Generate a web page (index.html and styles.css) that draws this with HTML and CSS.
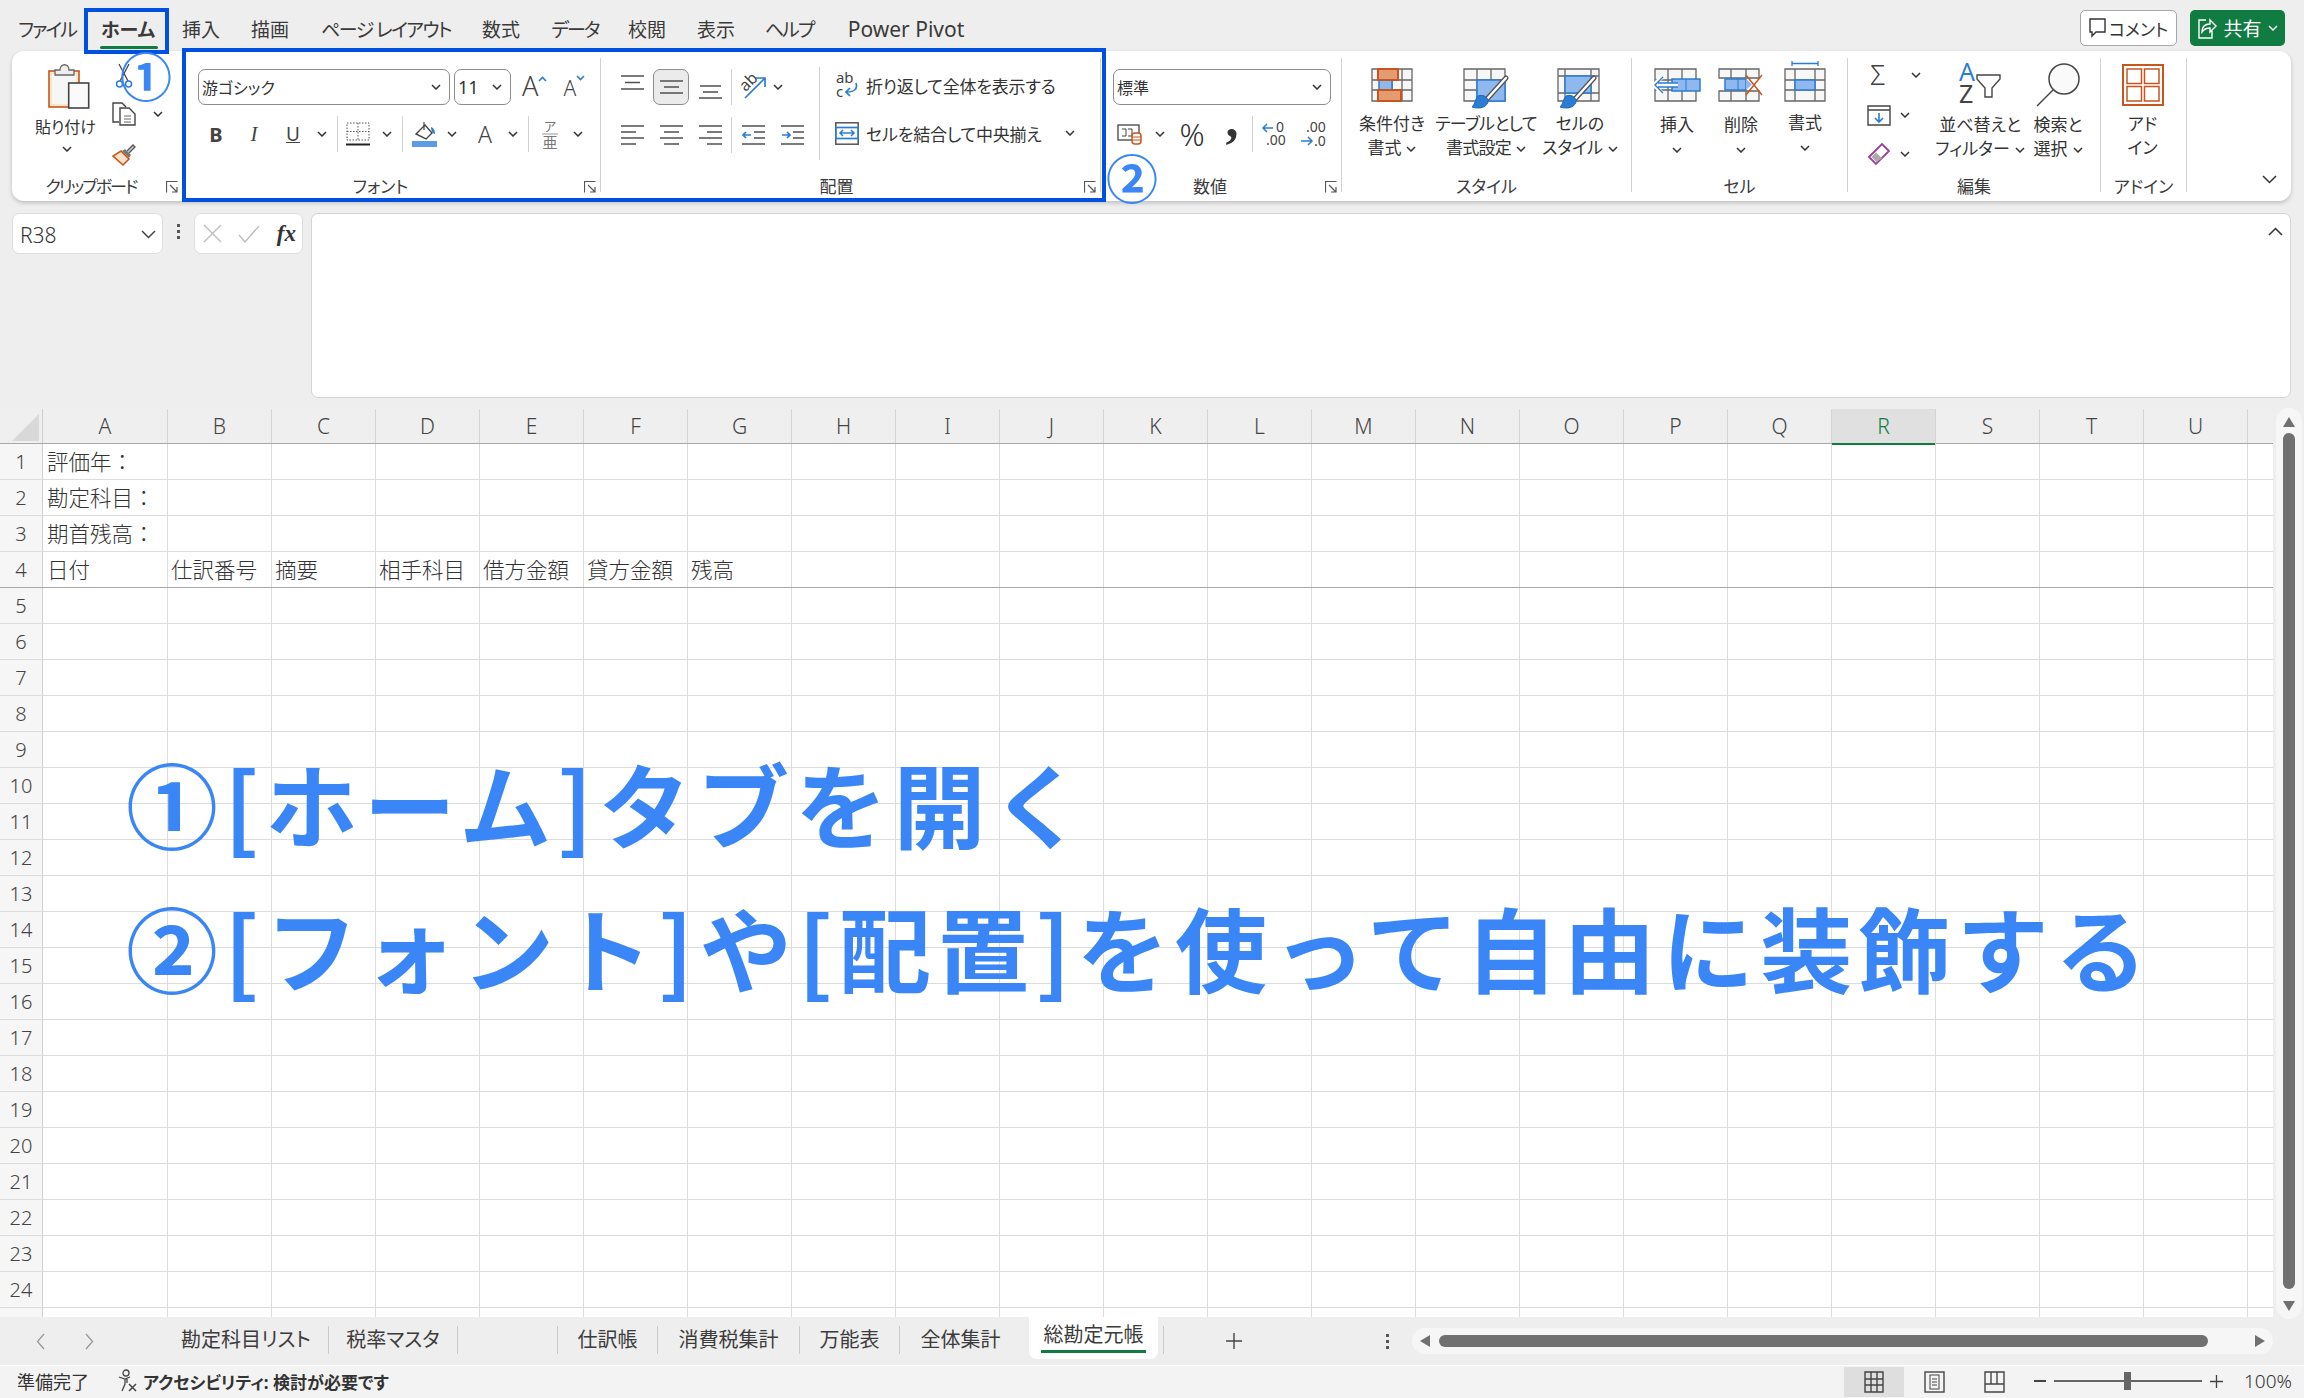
FILE: index.html
```html
<!DOCTYPE html>
<html lang="ja">
<head>
<meta charset="utf-8">
<title>総勘定元帳</title>
<link rel="stylesheet" href="styles.css">
</head>
<body>
<svg class="defs" width="0" height="0" aria-hidden="true">
  <symbol id="chev" viewBox="0 0 10 6"><path d="M1 1l4 4 4-4" fill="none" stroke="#333" stroke-width="1.5"/></symbol>
  <symbol id="launch" viewBox="0 0 12 12"><path d="M.5 11.5V.5h11M4 4l7 7M11 6v5H6" fill="none" stroke="#555" stroke-width="1.2"/></symbol>
  <symbol id="hl" viewBox="0 0 23 22"><path d="M0 2h23M0 8h15M0 14h23M0 20h15" stroke="#505050" stroke-width="1.6"/></symbol>
  <symbol id="hc" viewBox="0 0 23 22"><path d="M0 2h23M4 8h15M0 14h23M4 20h15" stroke="#505050" stroke-width="1.6"/></symbol>
  <symbol id="hr" viewBox="0 0 23 22"><path d="M0 2h23M8 8h15M0 14h23M8 20h15" stroke="#505050" stroke-width="1.6"/></symbol>
  <symbol id="brush" viewBox="0 0 46 42"><path d="M43 10L24 31" stroke="#555" stroke-width="5" stroke-linecap="round"/><path d="M43 10L24 31" stroke="#fff" stroke-width="2.4" stroke-linecap="round"/><path d="M15 28c5-2 10 1 10 5 0 5-7 9-16 6 3-2 3-8 6-11z" fill="#2b7cd3" stroke="#1f6ab8"/></symbol>
</svg>

<div class="app">
  <header class="menubar">
    <nav class="menu">
      <span class="kn">ファイル</span><span class="on">ホーム</span><span>挿入</span><span>描画</span><span class="kn2">ページ レイアウト</span><span>数式</span><span class="kn">データ</span><span>校閲</span><span>表示</span><span class="kn">ヘルプ</span><span class="pp">Power Pivot</span>
    </nav>
    <div class="actions">
      <button class="comment"><svg width="17" height="20" viewBox="0 0 17 20"><path d="M1 1h15v13H7l-4 4v-4H1z" fill="none" stroke="#333" stroke-width="1.4"/></svg>コメント</button>
      <button class="share"><svg width="20" height="22" viewBox="0 0 20 22"><path d="M9 3H2v18h13v-7M5 15c0-5 3-8 8-8V3l6 6-6 6v-4c-4 0-6 1-8 4z" fill="none" stroke="#fff" stroke-width="1.4"/></svg>共有<svg class="chev wh" width="10" height="6" viewBox="0 0 10 6"><path d="M1 1l4 4 4-4" fill="none" stroke="#fff" stroke-width="1.5"/></svg></button>
    </div>
  </header>

  <section class="ribbon">
    <!-- clipboard -->
    <div class="group g-clip">
      <div class="body clip-body">
        <div class="paste">
          <svg width="42" height="46" viewBox="0 0 42 46"><rect x="1" y="8" width="30" height="36" fill="#fbe6c6" stroke="#c8551e" stroke-width="1.6"/><rect x="4" y="11" width="24" height="30" fill="#f6f6f4"/><path d="M7 12V7h5c0-7 9-7 9 0h5v5z" fill="#eee" stroke="#666" stroke-width="1.3"/><rect x="20.7" y="20" width="20" height="25" fill="#fafafa" stroke="#444" stroke-width="1.6"/></svg>
          <span class="lbl">貼り付け</span>
          <svg class="chev"><use href="#chev"/></svg>
        </div>
        <div class="clip-tools">
          <svg class="ic-cut" width="16" height="25" viewBox="0 0 16 25"><path d="M3 1l9 17M13 1L4 18" stroke="#444" stroke-width="1.3" fill="none"/><circle cx="3.5" cy="21" r="3" fill="#fff" stroke="#2b7cd3" stroke-width="1.5"/><circle cx="12.5" cy="21" r="3" fill="#fff" stroke="#2b7cd3" stroke-width="1.5"/></svg>
          <div class="copy-row"><svg width="25" height="24" viewBox="0 0 25 24"><path d="M7 20H1V1h9l4 4" fill="none" stroke="#444" stroke-width="1.4"/><path d="M8 6h9l6 6v11H8z" fill="#fff" stroke="#444" stroke-width="1.4"/><path d="M12 14h7M12 17h7M12 20h7" stroke="#666"/></svg><svg class="chev"><use href="#chev"/></svg></div>
          <svg class="ic-brush" width="24" height="22" viewBox="0 0 24 22"><path d="M15 7l6-6 2 2-6 6" fill="#ccc" stroke="#555" stroke-width="1.3"/><path d="M13 5l6 6-2 3L10 7z" fill="#777"/><path d="M9 7l8 8-6 6L1 12z" fill="#fbe1c8" stroke="#c8551e" stroke-width="1.6"/></svg>
        </div>
      </div>
      <div class="glabel gl-clip">クリップボード<svg class="launch"><use href="#launch"/></svg></div>
    </div>

    <!-- font -->
    <div class="group g-font">
      <div class="body">
        <div class="font-r1">
          <div class="combo c-font"><span>游ゴシック</span><svg class="chev"><use href="#chev"/></svg></div>
          <div class="combo c-size"><span>11</span><svg class="chev"><use href="#chev"/></svg></div>
          <div class="grow"><span>A</span><svg class="caret" width="9" height="6" viewBox="0 0 9 6"><path d="M1 5l3.500-3.500L8 5" fill="none" stroke="#2b7cd3" stroke-width="1.6"/></svg></div>
          <div class="shrink"><span>A</span><svg class="caret" width="9" height="6" viewBox="0 0 9 6"><path d="M1 1l3.500 3.500L8 1" fill="none" stroke="#2b7cd3" stroke-width="1.6"/></svg></div>
        </div>
        <div class="font-r2">
          <b class="t-b">B</b><i class="t-i">I</i><u class="t-u">U</u><svg class="chev"><use href="#chev"/></svg><span class="vsep"></span>
          <svg width="24" height="24" viewBox="0 0 24 24"><path d="M1 1h22v17H1zM12 1v17M1 9.500h22" fill="none" stroke="#555" stroke-dasharray="1.500 1.500"/><path d="M0 22.500h24" stroke="#222" stroke-width="2"/></svg><svg class="chev"><use href="#chev"/></svg><span class="vsep"></span>
          <svg width="25" height="26" viewBox="0 0 25 26"><path d="M4 13L13 4l7 8-6 6z" fill="#fff" stroke="#444" stroke-width="1.4"/><path d="M12 1v8" stroke="#444" stroke-width="1.2"/><path d="M19 6c3 1 4 4 4 7-2 0-4-3-4-7z" fill="#2b7cd3"/><rect y="20" width="25" height="6" fill="#5b9be6"/></svg><svg class="chev"><use href="#chev"/></svg>
          <span class="t-a">A</span><svg class="chev"><use href="#chev"/></svg><span class="vsep"></span>
          <span class="phon"><small>ア</small>亜</span><svg class="chev"><use href="#chev"/></svg>
        </div>
      </div>
      <div class="glabel gl-font">フォント<svg class="launch"><use href="#launch"/></svg></div>
    </div>

    <!-- alignment -->
    <div class="group g-align">
      <div class="body al-body">
        <div class="al-left">
          <div class="al-r1">
            <svg class="al-top" width="23" height="15" viewBox="0 0 23 15"><path d="M0 1h23M4 7.500h15M0 14h23" stroke="#505050" stroke-width="1.6"/></svg>
            <span class="al-on"><svg width="23" height="14" viewBox="0 0 23 14"><path d="M0 1h23M4 7h15M0 13h23" stroke="#505050" stroke-width="1.6"/></svg></span>
            <svg class="al-bot" width="23" height="14" viewBox="0 0 23 14"><path d="M1 1h21M4 7h15M0 13h23" stroke="#505050" stroke-width="1.6"/></svg>
            <span class="vsep tall"></span>
            <svg width="26" height="26" viewBox="0 0 26 26"><text x="1" y="14" class="svgt" transform="rotate(-45 8 12)">ab</text><path d="M4 24L23 5M15 4h9v9" fill="none" stroke="#2b7cd3" stroke-width="1.7"/></svg>
            <svg class="chev"><use href="#chev"/></svg>
          </div>
          <div class="al-r2">
            <svg width="23" height="22"><use href="#hl"/></svg>
            <svg width="23" height="22"><use href="#hc"/></svg>
            <svg width="23" height="22"><use href="#hr"/></svg>
            <span class="vsep tall"></span>
            <svg width="23" height="22" viewBox="0 0 23 22"><path d="M0 2h23M12 8h11M12 14h11M0 20h23" stroke="#505050" stroke-width="1.6"/><path d="M9 11H1M4 8l-3 3 3 3" fill="none" stroke="#2b7cd3" stroke-width="1.7"/></svg>
            <svg width="23" height="22" viewBox="0 0 23 22"><path d="M0 2h23M12 8h11M12 14h11M0 20h23" stroke="#505050" stroke-width="1.6"/><path d="M1 11h8M6 8l3 3-3 3" fill="none" stroke="#2b7cd3" stroke-width="1.7"/></svg>
          </div>
        </div>
        <div class="al-right">
          <div class="al-cmd"><svg width="24" height="28" viewBox="0 0 24 28"><text x="1" y="12" class="svgt s15">ab</text><text x="1" y="26" class="svgt s15">c</text><path d="M21 12c2 6-2 9-9 9M15 17l-4 4 4 4" fill="none" stroke="#2b7cd3" stroke-width="1.7"/></svg><span>折り返して全体を表示する</span></div>
          <div class="al-cmd"><svg width="24" height="23" viewBox="0 0 24 23"><rect x=".8" y=".8" width="22.400" height="21.400" fill="#fff" stroke="#555" stroke-width="1.500"/><rect x="1" y="5.500" width="22" height="11" fill="#fff" stroke="#2b7cd3" stroke-width="1.700"/><path d="M5 11h14M8 8l-3 3 3 3M16 8l3 3-3 3" fill="none" stroke="#2b7cd3" stroke-width="1.500"/></svg><span>セルを結合して中央揃え</span><svg class="chev merge-chev"><use href="#chev"/></svg></div>
        </div>
      </div>
      <div class="glabel gl-align">配置<svg class="launch"><use href="#launch"/></svg></div>
    </div>

    <!-- number -->
    <div class="group g-num">
      <div class="body">
        <div class="combo c-num"><span>標準</span><svg class="chev"><use href="#chev"/></svg></div>
        <div class="num-r2">
          <svg width="26" height="21" viewBox="0 0 26 21"><rect x="1" y="1" width="21" height="15" fill="#fff" stroke="#444" stroke-width="1.300"/><path d="M5 5h4v7H5M11 5h4v7h-4" fill="none" stroke="#444"/><rect x="15" y="9" width="9" height="11" rx="3" fill="#fff" stroke="#c8551e" stroke-width="1.500"/><path d="M15 13h9M15 16h9" stroke="#c8551e"/></svg>
          <svg class="chev"><use href="#chev"/></svg>
          <span class="t-pct">%</span>
          <span class="t-comma">,</span>
          <span class="vsep"></span>
          <svg width="26" height="26" viewBox="0 0 26 26"><path d="M12 7H2M6 3L2 7l4 4" fill="none" stroke="#2b7cd3" stroke-width="1.500"/><text x="15" y="11" class="svgt s14">0</text><text x="5" y="24" class="svgt s14">.00</text></svg>
          <svg width="26" height="26" viewBox="0 0 26 26"><text x="7" y="11" class="svgt s14">.00</text><path d="M2 20h11M9 16l4 4-4 4" fill="none" stroke="#2b7cd3" stroke-width="1.500"/><text x="15" y="25" class="svgt s14">.0</text></svg>
        </div>
      </div>
      <div class="glabel gl-num">数値<svg class="launch"><use href="#launch"/></svg></div>
    </div>

    <!-- styles -->
    <div class="group g-style">
      <div class="body big3">
        <div class="bigcmd">
          <div class="bigico"><svg width="42" height="34" viewBox="0 0 42 34"><path d="M1 1h40v32H1zM1 12h40M1 22h40M11 1v32M21 1v32M31 1v32" fill="#f7f7f7" stroke="#666" stroke-width="1.300"/><rect x="8" y="12" width="13" height="10" fill="#8fb9ee" stroke="#2b7cd3" stroke-width="1.500"/><rect x="7" y="1" width="20" height="11" fill="#e39b6f" stroke="#c8551e" stroke-width="2"/><rect x="7" y="22" width="23" height="11" fill="#e39b6f" stroke="#c8551e" stroke-width="2"/></svg></div>
          <div class="lbl2">条件付き<br>書式<svg class="chev"><use href="#chev"/></svg></div>
        </div>
        <div class="bigcmd">
          <div class="bigico"><svg width="46" height="42" viewBox="0 0 46 42"><path d="M1 1h41v32H1zM1 12h41M1 22h41M14 1v32M28 1v32" fill="#f7f7f7" stroke="#666" stroke-width="1.300"/><rect x="14" y="12" width="28" height="21" fill="#8fb9ee" stroke="#2b7cd3" stroke-width="1.500"/><use href="#brush"/></svg></div>
          <div class="lbl2 tight">テーブルとして<br>書式設定<svg class="chev"><use href="#chev"/></svg></div>
        </div>
        <div class="bigcmd">
          <div class="bigico"><svg width="46" height="42" viewBox="0 0 46 42"><path d="M1 1h41v32H1zM1 8h41M1 25h41M8 1v32M34 1v32" fill="#f7f7f7" stroke="#666" stroke-width="1.300"/><rect x="8" y="8" width="26" height="17" fill="#8fb9ee" stroke="#2b7cd3" stroke-width="1.500"/><use href="#brush" x="-6"/></svg></div>
          <div class="lbl2">セルの<br>スタイル<svg class="chev"><use href="#chev"/></svg></div>
        </div>
      </div>
      <div class="glabel">スタイル</div>
    </div>

    <!-- cells -->
    <div class="group g-cells">
      <div class="body big3">
        <div class="bigcmd">
          <div class="bigico"><svg width="50" height="34" viewBox="0 0 50 34"><path d="M3 1h41v32H3zM3 12h41M3 22h41M16 1v32M30 1v32" fill="#f7f7f7" stroke="#666" stroke-width="1.300"/><rect x="20" y="11" width="28" height="12" fill="#8fb9ee" stroke="#2b7cd3" stroke-width="1.500"/><path d="M34 11v12" stroke="#2b7cd3"/><path d="M26 17H3M10 9l-8 8 8 8" fill="none" stroke="#fff" stroke-width="4"/><path d="M26 15H6M26 19H6M11 9l-8 8 8 8" fill="none" stroke="#2b7cd3" stroke-width="1.400"/></svg></div>
          <div class="lbl2 lo">挿入<br><svg class="chev solo"><use href="#chev"/></svg></div>
        </div>
        <div class="bigcmd">
          <div class="bigico"><svg width="46" height="34" viewBox="0 0 46 34"><path d="M1 1h40v9H1zM1 23h40v10H1zM13 1v9M28 1v9M13 23v10M28 23v10" fill="#f7f7f7" stroke="#666" stroke-width="1.300"/><rect x="7" y="11" width="21" height="11" fill="#8fb9ee" stroke="#2b7cd3" stroke-width="1.500"/><path d="M20 11v11" stroke="#2b7cd3"/><path d="M28 11l6 5.500-6 5.500z" fill="#8fb9ee"/><path d="M28 7l16 20M44 7L28 27" stroke="#c8551e" stroke-width="1.500"/></svg></div>
          <div class="lbl2 lo">削除<br><svg class="chev solo"><use href="#chev"/></svg></div>
        </div>
        <div class="bigcmd up">
          <div class="bigico"><svg width="42" height="41" viewBox="0 0 42 41"><path d="M8 2.500h26M8 0v5M34 0v5" stroke="#2b7cd3" stroke-width="1.300" fill="none"/><path d="M1 8h40v32H1zM1 19h40M1 29h40M11 8v32M31 8v32" fill="#f7f7f7" stroke="#666" stroke-width="1.300"/><rect x="11" y="19" width="20" height="10" fill="#8fb9ee" stroke="#2b7cd3" stroke-width="1.500"/></svg></div>
          <div class="lbl2 lo">書式<br><svg class="chev solo"><use href="#chev"/></svg></div>
        </div>
      </div>
      <div class="glabel">セル</div>
    </div>

    <!-- editing -->
    <div class="group g-edit">
      <div class="body edit-body">
        <div class="edit-left">
          <div class="er er1"><span class="sig">Σ</span><svg class="chev"><use href="#chev"/></svg></div>
          <div class="er er2"><svg width="24" height="21" viewBox="0 0 24 21"><path d="M1 1h22v19H1zM1 5h22" fill="#fff" stroke="#444" stroke-width="1.400"/><path d="M12 8v9M8 13l4 4 4-4" fill="none" stroke="#2b7cd3" stroke-width="1.600"/></svg><svg class="chev"><use href="#chev"/></svg></div>
          <div class="er er3"><svg width="24" height="24" viewBox="0 0 24 24"><path d="M2 15L15 2l7 7L9 22z" fill="#fff" stroke="#9b3f9b" stroke-width="1.800"/><path d="M4.500 15L9 10.500l6 6L9.500 20z" fill="#aaa"/></svg><svg class="chev"><use href="#chev"/></svg></div>
        </div>
        <div class="bigcmd sort">
          <div class="bigico"><svg width="42" height="40" viewBox="0 0 42 40"><text x="0" y="17" class="svgt az blue">A</text><text x="0" y="39" class="svgt az">Z</text><path d="M18 11h23v4l-8 9v9h-7v-9l-8-9z" fill="#fff" stroke="#444" stroke-width="1.400"/></svg></div>
          <div class="lbl2">並べ替えと<br>フィルター<svg class="chev"><use href="#chev"/></svg></div>
        </div>
        <div class="bigcmd find">
          <div class="bigico"><svg width="44" height="44" viewBox="0 0 44 44"><circle cx="28" cy="16" r="15" fill="#fafafa" stroke="#444" stroke-width="1.500"/><path d="M17 27L1 43" stroke="#444" stroke-width="1.500"/></svg></div>
          <div class="lbl2">検索と<br>選択<svg class="chev"><use href="#chev"/></svg></div>
        </div>
      </div>
      <div class="glabel">編集</div>
    </div>

    <!-- add-ins -->
    <div class="group g-add">
      <div class="body big3">
        <div class="bigcmd">
          <div class="bigico"><svg width="42" height="42" viewBox="0 0 42 42"><rect x="1" y="1" width="40" height="40" fill="#fff" stroke="#c8551e" stroke-width="2"/><rect x="5" y="5" width="14.500" height="14.500" fill="#fff" stroke="#c8551e" stroke-width="1.500"/><rect x="22.500" y="5" width="14.500" height="14.500" fill="#fff" stroke="#c8551e" stroke-width="1.500"/><rect x="5" y="22.500" width="14.500" height="14.500" fill="#fff" stroke="#c8551e" stroke-width="1.500"/><rect x="22.500" y="22.500" width="14.500" height="14.500" fill="#fff" stroke="#c8551e" stroke-width="1.500"/></svg></div>
          <div class="lbl2">アド<br>イン</div>
        </div>
      </div>
      <div class="glabel">アドイン</div>
    </div>
    <div class="collapse"><svg width="15" height="9" viewBox="0 0 15 9"><path d="M1 1l6.500 6.500L14 1" fill="none" stroke="#333" stroke-width="1.500"/></svg></div>
  </section>

  <section class="fbar">
    <div class="namebox"><span>R38</span><svg width="15" height="9" viewBox="0 0 15 9"><path d="M1 1l6.500 6.500L14 1" fill="none" stroke="#444" stroke-width="1.500"/></svg></div>
    <div class="fdots"><i></i><i></i><i></i></div>
    <div class="fxbox">
      <svg width="19" height="19" viewBox="0 0 19 19"><path d="M1 1l17 17M18 1L1 18" stroke="#bdbdbd" stroke-width="1.400"/></svg>
      <svg width="22" height="18" viewBox="0 0 22 18"><path d="M1 10l6 7L21 1" fill="none" stroke="#bdbdbd" stroke-width="1.400"/></svg>
      <span class="fx">fx</span>
    </div>
    <div class="formula"><svg width="15" height="9" viewBox="0 0 15 9"><path d="M1 8l6.500-6.500L14 8" fill="none" stroke="#333" stroke-width="1.500"/></svg></div>
  </section>

  <section class="sheet">
    <div class="grid">
      <div class="colhead">
        <div class="corner"><span class="tri"></span></div>
        <div class="ch cha">A</div><div class="ch">B</div><div class="ch">C</div><div class="ch">D</div><div class="ch">E</div><div class="ch">F</div><div class="ch">G</div><div class="ch">H</div><div class="ch">I</div><div class="ch">J</div><div class="ch">K</div><div class="ch">L</div><div class="ch">M</div><div class="ch">N</div><div class="ch">O</div><div class="ch">P</div><div class="ch">Q</div><div class="ch sel">R</div><div class="ch">S</div><div class="ch">T</div><div class="ch">U</div><div class="ch"></div>
      </div>
      <div class="row"><div class="rh">1</div><div class="ca">評価年：</div></div>
      <div class="row"><div class="rh">2</div><div class="ca">勘定科目：</div></div>
      <div class="row"><div class="rh">3</div><div class="ca">期首残高：</div></div>
      <div class="row freeze"><div class="rh">4</div><div class="ca">日付</div><div class="cb">仕訳番号</div><div class="cb">摘要</div><div class="cb">相手科目</div><div class="cb">借方金額</div><div class="cb">貸方金額</div><div class="cb">残高</div></div>
      <div class="row"><div class="rh">5</div><div class="ca"></div></div>
      <div class="row"><div class="rh">6</div><div class="ca"></div></div>
      <div class="row"><div class="rh">7</div><div class="ca"></div></div>
      <div class="row"><div class="rh">8</div><div class="ca"></div></div>
      <div class="row"><div class="rh">9</div><div class="ca"></div></div>
      <div class="row"><div class="rh">10</div><div class="ca"></div></div>
      <div class="row"><div class="rh">11</div><div class="ca"></div></div>
      <div class="row"><div class="rh">12</div><div class="ca"></div></div>
      <div class="row"><div class="rh">13</div><div class="ca"></div></div>
      <div class="row"><div class="rh">14</div><div class="ca"></div></div>
      <div class="row"><div class="rh">15</div><div class="ca"></div></div>
      <div class="row"><div class="rh">16</div><div class="ca"></div></div>
      <div class="row"><div class="rh">17</div><div class="ca"></div></div>
      <div class="row"><div class="rh">18</div><div class="ca"></div></div>
      <div class="row"><div class="rh">19</div><div class="ca"></div></div>
      <div class="row"><div class="rh">20</div><div class="ca"></div></div>
      <div class="row"><div class="rh">21</div><div class="ca"></div></div>
      <div class="row"><div class="rh">22</div><div class="ca"></div></div>
      <div class="row"><div class="rh">23</div><div class="ca"></div></div>
      <div class="row"><div class="rh">24</div><div class="ca"></div></div>
      <div class="row"><div class="rh"></div><div class="ca"></div></div>
    </div>
    <div class="vscroll">
      <svg width="12" height="10" viewBox="0 0 12 10"><path d="M6 0l6 10H0z" fill="#707070"/></svg>
      <span class="vthumb"></span>
      <svg width="12" height="10" viewBox="0 0 12 10"><path d="M6 10L0 0h12z" fill="#707070"/></svg>
    </div>
  </section>

  <section class="tabbar">
    <div class="tabnav">
      <svg width="9" height="17" viewBox="0 0 9 17"><path d="M8 1L1.500 8.500 8 16" fill="none" stroke="#999" stroke-width="1.300"/></svg>
      <svg width="9" height="17" viewBox="0 0 9 17"><path d="M1 1l6.500 7.500L1 16" fill="none" stroke="#999" stroke-width="1.300"/></svg>
    </div>
    <div class="tabs">
      <span class="tab">勘定科目リスト</span><span class="tab">税率マスタ</span><span class="tab"></span><span class="tab">仕訳帳</span><span class="tab">消費税集計</span><span class="tab">万能表</span><span class="tab plain">全体集計</span><span class="tab active"><em>総勘定元帳</em></span>
    </div>
    <span class="tabend"></span>
    <svg class="plus" width="16" height="16" viewBox="0 0 16 16"><path d="M8 0v16M0 8h16" stroke="#444" stroke-width="1.400"/></svg>
    <div class="fdots tabdots"><i></i><i></i><i></i></div>
    <div class="hscroll">
      <svg width="10" height="12" viewBox="0 0 10 12"><path d="M0 6l10-6v12z" fill="#707070"/></svg>
      <span class="hthumb"></span>
      <svg width="10" height="12" viewBox="0 0 10 12"><path d="M10 6L0 0v12z" fill="#707070"/></svg>
    </div>
  </section>

  <footer class="status">
    <span class="ready">準備完了</span>
    <svg class="acc" width="20" height="24" viewBox="0 0 20 24"><circle cx="8" cy="4" r="3" fill="none" stroke="#444" stroke-width="1.300"/><path d="M1 8l6 2 5-2M7 10v5l-3 7M9 10v4" fill="none" stroke="#444" stroke-width="1.300"/><path d="M11 15l7 7M18 15l-7 7" stroke="#444" stroke-width="1.500"/></svg>
    <b class="acctext">アクセシビリティ: 検討が必要です</b>
    <div class="viewbtns">
      <span class="vb on"><svg width="20" height="22" viewBox="0 0 20 22"><path d="M1 1h18v20H1zM1 8h18M1 14h18M7 1v20M13 1v20" fill="none" stroke="#444" stroke-width="1.400"/></svg></span>
      <span class="vb"><svg width="21" height="22" viewBox="0 0 21 22"><rect x="1" y="1" width="19" height="20" fill="none" stroke="#444" stroke-width="1.400"/><rect x="6" y="4" width="9" height="14" fill="none" stroke="#444"/><path d="M8 8h5M8 11h5M8 14h5" stroke="#444"/></svg></span>
      <span class="vb"><svg width="21" height="22" viewBox="0 0 21 22"><path d="M1 1h19v20H1zM1 13h19M7 1v12M13 1v12" fill="none" stroke="#444" stroke-width="1.400"/></svg></span>
    </div>
    <div class="zoom">
      <span class="zm"></span>
      <div class="slider"><span class="knob"></span></div>
      <svg width="13" height="13" viewBox="0 0 13 13"><path d="M6.500 0v13M0 6.500h13" stroke="#444" stroke-width="1.300"/></svg>
      <span class="pct">100%</span>
    </div>
  </footer>

  <div class="mark mark-home"></div>
  <div class="mark mark-font"></div>
  <span class="num-note n1">①</span>
  <span class="num-note n2">②</span>
  <div class="note">
    <p>①[ホーム]タブを開く</p>
    <p>②[フォント]や[配置]を使って自由に装飾する</p>
  </div>
</div>
</body>
</html>
```

FILE: styles.css
```css
* { box-sizing: border-box; }
html, body { margin: 0; padding: 0; }
body {
  width: 2304px; height: 1398px; overflow: hidden;
  background: #efeeee; color: #333;
  font-family: "Noto Sans", "Noto Sans CJK JP", sans-serif;
  font-size: 17px; font-weight: 400;
  font-feature-settings: "palt";
}
.defs { position: absolute; }
.app { position: relative; width: 2304px; height: 1398px; display: flex; flex-direction: column; }
svg { display: block; flex: none; overflow: visible; }
.svgt { font: 400 16px "Noto Sans", sans-serif; fill: #444; }
.s14 { font-size: 14px; }
.s15 { font-size: 15px; }
.az { font-size: 25px; }
.blue { fill: #2b7cd3; }
.chev { width: 10px; height: 6px; }

/* menu */
.menubar { height: 51px; display: flex; justify-content: space-between; flex: none; }
.menu { display: grid; grid-template-columns: 82px 80px 66px 72px 160px 70px 78px 66px 72px 74px 160px; padding-left: 6px; height: 42px; margin-top: 8px; align-items: center; justify-items: center; font-size: 19px; color: #3a3a3a; }
.menu .on { font-weight: 700; position: relative; }
.menu .on::after { content: ""; position: absolute; left: -1px; right: -3px; bottom: -6px; height: 3px; background: #107c41; border-radius: 2px; }
.menu .kn { letter-spacing: -2px; }
.menu .kn2 { letter-spacing: -1.600px; }
.menu .pp { font-size: 21px; }
.actions { display: flex; gap: 13px; padding: 10px 19px 0 0; }
.actions button { height: 36px; border-radius: 5px; display: flex; align-items: center; font: inherit; padding: 0; }
.comment { width: 97px; background: #fff; border: 1px solid #a6a6a6; color: #333; gap: 3px; justify-content: center; font-size: 17px !important; }
.share { width: 95px; background: #107c41; border: 0; color: #fff; gap: 6px; justify-content: center; font-size: 19px !important; }

/* ribbon */
.ribbon { flex: none; height: 150px; margin: 0 13px 0 12px; padding: 7px 0 9px; background: #fff; border-radius: 12px; box-shadow: 0 2px 4px rgba(0,0,0,.2); display: flex; }
.group { height: 134px; display: flex; flex-direction: column; border-right: 1px solid #d2d2d2; flex: none; }
.g-clip { width: 171px; }
.g-font { width: 418px; }
.g-align { width: 500px; }
.g-num { width: 241px; }
.g-style { width: 290px; }
.g-cells { width: 216px; }
.g-edit { width: 253px; }
.g-add { width: 86px; }
.body { flex: 1; padding-top: 11px; min-height: 0; }
.glabel { height: 20px; margin-bottom: -1px; position: relative; text-align: center; font-size: 17px; line-height: 20px; color: #3c3c3c; flex: none; transform: translateY(4px); }
.gl-clip { letter-spacing: -2px; padding-right: 12px; }
.gl-font { padding-right: 22px; }
.gl-align { padding-right: 28px; }
.gl-num { padding-right: 22px; }
.launch { position: absolute; right: 4px; top: 4px; width: 12px; height: 12px; }

/* clipboard */
.clip-body { display: flex; padding-top: 5px; }
.paste { width: 97px; padding-left: 36px; display: flex; flex-direction: column; align-items: flex-start; }
.paste svg:first-child { margin-left: 0; }
.paste .lbl { margin-left: -13px; line-height: 24px; margin-top: 6px; white-space: nowrap; color: #333; font-size: 16px; }
.paste .chev { margin: 7px 0 0 14px; }
.clip-tools { display: flex; flex-direction: column; padding-top: 0; margin-left: 3px; }
.ic-cut { margin-left: 4px; }
.copy-row { display: flex; align-items: center; gap: 16px; margin-top: 14px; }
.ic-brush { margin-top: 18px; }

/* combos */
.combo { height: 36px; border: 1px solid #8d8d8d; border-radius: 7px; display: flex; align-items: center; justify-content: space-between; padding: 0 3px 0 3px; background: #fff; font-size: 16px; }
.combo .chev { margin-right: 5px; }
.c-font { width: 252px; flex: none; }
.c-size { width: 57px; flex: none; font-family: "Noto Sans", sans-serif; font-size: 18px; }
.c-num { width: 218px; margin-left: 12px; }

/* font group */
.font-r1 { display: flex; padding-left: 15px; align-items: flex-start; gap: 4px; }
.grow, .shrink { display: flex; font-weight: 300; color: #444; align-items: flex-start; }
.grow { margin-left: 7px; font-size: 27px; line-height: 32px; margin-top: 1px; }
.shrink { margin-left: 12px; font-size: 21px; line-height: 28px; margin-top: 5px; }
.caret { margin-top: 6px; }
.shrink .caret { margin-top: 1px; }
.font-r2 { display: grid; grid-template-columns: 34px 42px 36px 22px 8px 34px 24px 6px 38px 18px 48px 8px 22px 22px 34px; padding-left: 16px; height: 32px; margin-top: 11px; align-items: center; justify-items: center; font-size: 20px; color: #444; }
.vsep { display: block; width: 1px; height: 36px; background: #d2d2d2; }
.t-b { font-family: "Noto Sans", sans-serif; font-weight: 700; font-size: 20px; }
.t-i { font-family: "Liberation Serif", serif; font-size: 21px; }
.t-u { font-family: "Noto Sans", sans-serif; font-size: 19px; }
.t-a { font-family: "Noto Sans", sans-serif; font-weight: 300; font-size: 23px; }
.phon { display: flex; flex-direction: column; align-items: center; font-size: 15px; line-height: 14px; color: #777; font-feature-settings: normal; }
.phon small { font-size: 13px; border-bottom: 2px solid #ccc; line-height: 13px; padding: 0 1px; }

/* alignment */
.al-body { display: flex; padding-top: 9px; }
.al-left { width: 219px; height: 93px; border-right: 1px solid #d2d2d2; padding: 2px 0 0 12px; }
.al-r1 { display: grid; grid-template-columns: 39px 38px 40px 2px 43px 6px; height: 36px; align-items: center; justify-items: center; }
.al-top { align-self: start; margin-top: 6px; }
.al-on { width: 36px; height: 36px; border: 1px solid #8d8d8d; border-radius: 7px; background: #ebebeb; display: flex; align-items: center; justify-content: center; }
.al-bot { align-self: start; margin-top: 16px; }
.vsep.tall { height: 36px; }
.al-r2 { display: grid; grid-template-columns: 39px 38px 40px 2px 42px 36px; height: 36px; margin-top: 12px; align-items: center; justify-items: center; }
.al-right { padding: 4px 0 0 15px; flex: 1; }
.al-cmd { height: 28px; display: flex; align-items: center; gap: 7px; font-size: 17px; white-space: nowrap; letter-spacing: -.2px; }
.al-cmd + .al-cmd { margin-top: 20px; }
.merge-chev { margin-left: 17px; }

/* number */
.num-r2 { display: grid; grid-template-columns: 34px 25px 40px 40px 1px 42px 34px; padding-left: 12px; height: 36px; margin-top: 11px; align-items: center; justify-items: center; }
.t-pct { font-family: "Noto Sans", sans-serif; font-weight: 300; font-size: 31px; line-height: 36px; }
.t-comma { font-family: "Liberation Serif", serif; font-weight: 700; font-size: 52px; line-height: 36px; margin-top: -28px; }

/* big commands */
.big3 { display: flex; padding-top: 10px; }
.g-style .big3 { padding-left: 0; }
.bigcmd { display: flex; flex-direction: column; align-items: center; }
.g-style .bigcmd:nth-child(1) { width: 100px; }
.g-style .bigcmd:nth-child(2) { width: 88px; }
.g-style .bigcmd:nth-child(3) { width: 100px; }
.g-cells .big3 { padding-left: 13px; }
.g-cells .bigcmd { width: 64px; }
.g-add .bigcmd { width: 86px; padding-right: 2px; }
.bigico { height: 44px; display: flex; }
.up .bigico { margin-top: -7px; height: 49px; }
.g-add .bigico { margin-top: -4px; height: 48px; }
.lbl2 { line-height: 24px; text-align: center; white-space: nowrap; font-size: 17px; color: #333; }
.lbl2.tight { letter-spacing: -.7px; }
.lbl2 .chev { display: inline-block; margin-left: 5px; vertical-align: 2px; }
.lbl2 .chev.solo { margin: 0 auto; }
.lbl2.lo { padding-top: 1px; }

/* editing */
.edit-body { display: flex; padding-top: 6px; }
.edit-left { width: 92px; padding-left: 19px; }
.er { display: flex; align-items: center; height: 39px; }
.er1 { height: 22px; margin-bottom: 17px; gap: 16px; }
.er2, .er3 { gap: 9px; height: 24px; margin-bottom: 15px; }
.sig { font-size: 27px; font-family: "Noto Sans", sans-serif; font-weight: 300; line-height: 22px; width: 28px; color: #444; padding-left: 3px; }
.sort { width: 80px; margin-top: 0; }
.sort .bigico { height: 49px; }
.find { width: 76px; margin-left: 0; }
.find .bigico { height: 49px; margin-top: -1px; padding-bottom: 0; }
.find .lbl2 { margin-top: 1px; }
.collapse { margin-left: auto; padding: 117px 14px 0 0; }

/* formula bar */
.fbar { flex: none; height: 208px; display: flex; padding: 12px 13px 0 12px; align-items: flex-start; }
.namebox { width: 151px; height: 41px; background: #fff; border: 1px solid #dedede; border-radius: 7px; display: flex; align-items: center; justify-content: space-between; padding: 2px 6px 0 7px; font-size: 21px; font-weight: 300; }
.fdots { display: flex; flex-direction: column; gap: 3px; width: 31px; align-items: center; padding-top: 11px; }
.fdots i { width: 3px; height: 3px; background: #555; display: block; }
.fxbox { width: 109px; height: 41px; background: #fff; border: 1px solid #dedede; border-radius: 7px; display: flex; align-items: center; padding: 0 6px 0 8px; justify-content: space-between; }
.fx { font: italic 700 23px "Liberation Serif", serif; color: #333; }
.formula { width: 1980px; height: 185px; margin-left: 8px; background: #fff; border: 1px solid #d4d4d4; border-radius: 7px; display: flex; justify-content: flex-end; padding: 13px 7px 0 0; }

/* sheet */
.sheet { flex: none; height: 908px; display: flex; }
.grid { width: 2273px; overflow: hidden; background: #fff; }
.colhead { display: flex; height: 35px; background: #efefef; border-bottom: 1px solid #a9a9a9; }
.corner { width: 43px; flex: none; position: relative; border-right: 1px solid #cfcfcf; }
.tri { position: absolute; right: 3px; top: 5px; width: 0; height: 0; border-left: 27px solid transparent; border-bottom: 27px solid #d8d8d8; }
.ch { width: 104px; flex: none; text-align: center; line-height: 35px; font-size: 21px; font-weight: 300; color: #444; border-right: 1px solid #d4d4d4; }
.cha { width: 125px; }
.ch.sel { background: #e0e0e0; color: #107c41; box-shadow: inset 0 -2px 0 #107c41; position: relative; height: 36px; }
.row { height: 36px; display: flex; border-bottom: 1px solid #dcdcdc; background: linear-gradient(90deg, #dcdcdc 1px, transparent 1px) 167px 0 / 104px 100% repeat-x #fff; }
.row.freeze { border-bottom-color: #a9a9a9; }
.rh { width: 43px; flex: none; background: #f6f6f6; border-right: 1px solid #cfcfcf; text-align: center; line-height: 36px; font-size: 20px; font-weight: 300; color: #444; }
.ca { width: 125px; flex: none; background: #fff; border-right: 1px solid #dcdcdc; padding-left: 4px; }
.ca, .cb { font-size: 21.500px; line-height: 35px; color: #333; white-space: nowrap; font-feature-settings: normal; font-weight: 300; }
.cb { width: 104px; flex: none; padding-left: 3px; }
.vscroll { margin: -1px 2px 0 3px; width: 26px; height: 911px; background: #f6f6f6; border-radius: 13px; display: flex; flex-direction: column; align-items: center; padding: 9px 0 8px; position: relative; z-index: 1; }
.vthumb { width: 12px; height: 857px; background: #707070; border-radius: 6px; margin: 6px 0 12px; }

/* tabs */
.tabbar { flex: none; height: 48px; display: flex; align-items: center; font-size: 20px; color: #3c3c3c; }
.tabnav { width: 164px; display: flex; padding-left: 36px; gap: 40px; }
.tabs { display: grid; grid-template-columns: 165px 129px 100px 100px 142px 100px 129px 129px; align-items: center; justify-items: center; }
.tab { width: 100%; height: 28px; line-height: 28px; text-align: center; border-right: 1px solid #c9c9c9; margin-top: -2px; }
.tab.plain { border-right: 0; padding-right: 8px; }
.tab.active { height: 42px; margin-top: -6px; background: #fff; border: 0; border-radius: 0 0 8px 8px; display: flex; justify-content: center; }
.tab em { font-style: normal; display: block; height: 36px; line-height: 36px; border-bottom: 3px solid #107c41; width: 105px; white-space: nowrap; }
.tabend { width: 1px; height: 28px; background: #c9c9c9; margin: -2px 0 0 5px; }
.plus { margin-left: 62px; }
.tabdots { width: 6px; padding: 0; margin-left: 142px; }
.hscroll { margin-left: 22px; width: 861px; height: 26px; background: #f6f6f6; border-radius: 13px; display: flex; align-items: center; padding: 0 8px; }
.hthumb { width: 769px; height: 12px; background: #707070; border-radius: 6px; margin: 0 auto 0 9px; }

/* status */
.status { flex: none; height: 33px; background: #f3f3f3; border-top: 1px solid #fff; display: flex; align-items: center; padding: 0 0 2px 17px; font-size: 18px; color: #333; }
.ready { width: 101px; }
.acc { margin-right: 5px; }
.acctext { font-weight: 700; font-size: 17px; }
.viewbtns { margin-left: auto; display: flex; height: 100%; margin-bottom: -2px; }
.vb { width: 60px; display: flex; align-items: center; justify-content: center; }
.vb.on { background: #dedede; }
.zoom { display: flex; align-items: center; margin-left: 10px; width: 270px; padding-right: 12px; }
.zm { width: 12px; height: 1.500px; background: #444; }
.slider { width: 148px; height: 2px; background: #666; margin: 0 8px; position: relative; }
.knob { position: absolute; left: 70px; top: -8px; width: 7px; height: 18px; background: #666; }
.pct { margin-left: auto; font-size: 19px; font-weight: 300; }

/* annotations */
.mark { position: absolute; border: 4px solid #0050e0; }
.mark-home { left: 84px; top: 8px; width: 85px; height: 46px; }
.mark-font { left: 182px; top: 48px; width: 924px; height: 154px; }
.num-note { position: absolute; font-weight: 700; color: #3a86f7; font-size: 52px; line-height: 52px; }
.n1 { left: 120px; top: 51px; }
.n2 { left: 1106px; top: 153px; }
.note { position: absolute; left: 126px; top: 730px; color: #3a86f7; font-weight: 700; font-size: 92px; letter-spacing: 6.300px; line-height: 144px; font-family: "Noto Sans CJK JP", sans-serif; font-feature-settings: normal; white-space: nowrap; }
.note p { margin: 0; }
```
